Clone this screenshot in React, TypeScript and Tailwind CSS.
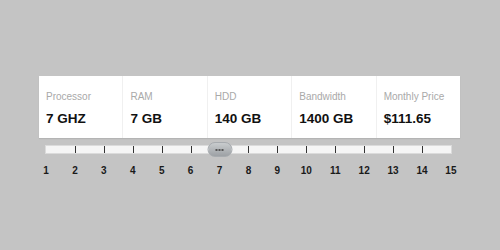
import React from "react";

const specs = [
  { label: "Processor", value: "7 GHZ" },
  { label: "RAM", value: "7 GB" },
  { label: "HDD", value: "140 GB" },
  { label: "Bandwidth", value: "1400 GB" },
  { label: "Monthly Price", value: "$111.65" },
];

const steps = Array.from({ length: 15 }, (_, i) => i + 1);

const App: React.FC = () => {
  const current = 7;
  const pct = ((current - 1) / 14) * 100;

  return (
    <div
      className="w-[500px] h-[250px] bg-[#c4c4c4] overflow-hidden"
      style={{ fontFamily: '"Liberation Sans", Arial, sans-serif' }}
    >
      <div className="pt-[76px] pl-[39px]">
        <div className="flex w-[421px] h-[62px] bg-white shadow-[0_1px_1px_rgba(0,0,0,0.08)]">
          {specs.map((s, i) => (
            <div
              key={s.label}
              className={`flex-1 pl-[7px] pt-[15px] ${i > 0 ? "border-l border-[#f0f0f0]" : ""}`}
            >
              <div className="text-[10px] leading-[12px] text-[#a9a9a9]">{s.label}</div>
              <div className="mt-[8px] text-[13.5px] leading-[16px] font-bold text-[#111]">
                {s.value}
              </div>
            </div>
          ))}
        </div>
      </div>

      <div className="ml-[46px] w-[405px] mt-[8px]">
        <div className="relative h-[7px] bg-[#f5f5f5] shadow-[0_0_0_1px_rgba(255,255,255,0.4)]">
          <div className="flex justify-between h-full">
            {steps.map((n) => (
              <div key={n} className="relative w-0 h-full">
                {n !== 1 && n !== 15 && (
                  <div className="absolute left-0 top-0 w-px h-[7px] bg-[#333]" />
                )}
              </div>
            ))}
          </div>
          <div
            className="absolute top-[-4px] w-[25px] h-[15px] -translate-x-1/2 rounded-[8px] border border-[#a7abaf] bg-gradient-to-b from-[#c9ccce] to-[#9da1a5] flex items-center justify-center gap-[1px]"
            style={{ left: `${pct}%` }}
          >
            <span className="w-[2px] h-[2px] bg-[#555]" />
            <span className="w-[2px] h-[2px] bg-[#555]" />
            <span className="w-[2px] h-[2px] bg-[#555]" />
          </div>
        </div>
        <div className="flex justify-between mt-[12px]">
          {steps.map((n) => (
            <div key={n} className="relative w-0 flex justify-center">
              <span className="text-[10px] leading-[12px] font-bold text-[#1a1a1a] whitespace-nowrap">
                {n}
              </span>
            </div>
          ))}
        </div>
      </div>
    </div>
  );
};

export default App;
